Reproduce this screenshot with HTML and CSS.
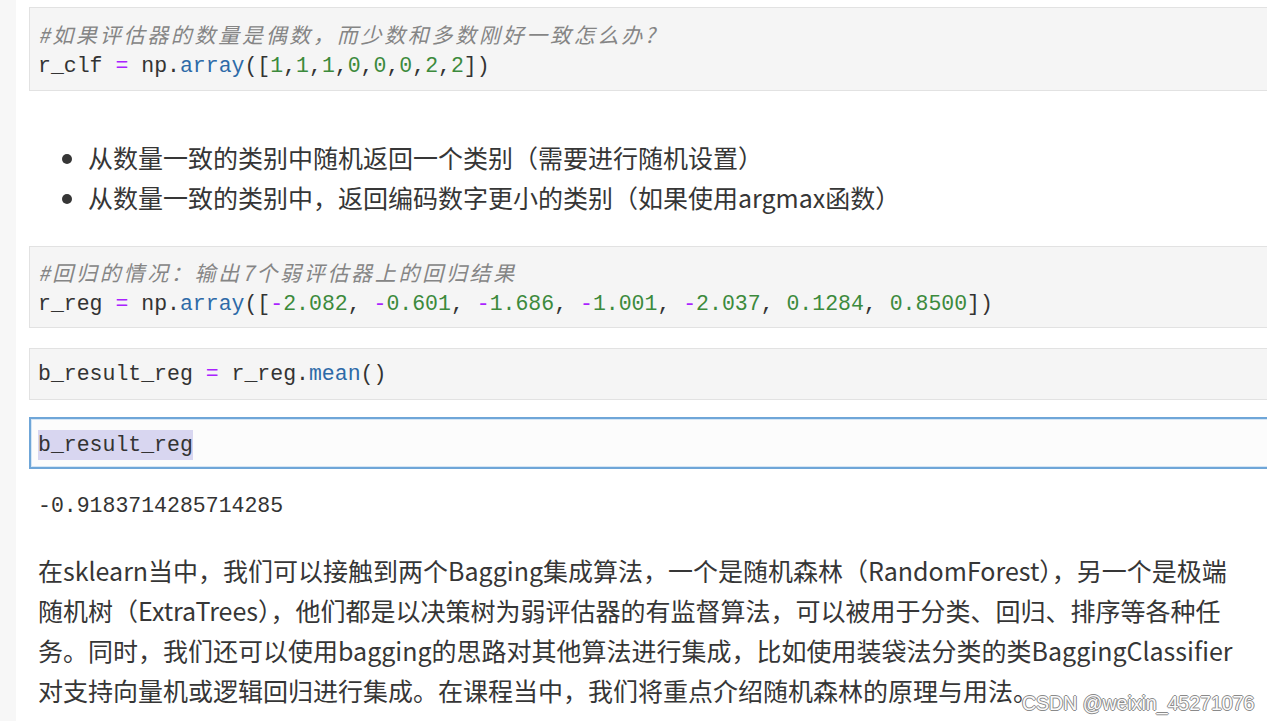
FILE: index.html
```html
<!DOCTYPE html>
<html lang="zh">
<head>
<meta charset="utf-8">
<title>Notebook</title>
<link rel="stylesheet" href="styles.css">
</head>
<body>
<div class="page">
  <div class="gutter"></div>
  <main class="notebook">
    <div class="cell code-cell c1">
      <div class="line"><span class="cm">#如果评估器的数量是偶数，而少数和多数刚好一致怎么办?</span></div>
      <div class="line">r_clf <span class="op">=</span> np.<span class="fn">array</span>([<span class="nu">1</span>,<span class="nu">1</span>,<span class="nu">1</span>,<span class="nu">0</span>,<span class="nu">0</span>,<span class="nu">0</span>,<span class="nu">2</span>,<span class="nu">2</span>])</div>
    </div>

    <ul class="md-list">
      <li>从数量一致的类别中随机返回一个类别（需要进行随机设置）</li>
      <li>从数量一致的类别中，返回编码数字更小的类别（如果使用argmax函数）</li>
    </ul>

    <div class="cell code-cell c2">
      <div class="line"><span class="cm">#回归的情况：输出7个弱评估器上的回归结果</span></div>
      <div class="line">r_reg <span class="op">=</span> np.<span class="fn">array</span>([<span class="op">-</span><span class="nu">2.082</span>, <span class="op">-</span><span class="nu">0.601</span>, <span class="op">-</span><span class="nu">1.686</span>, <span class="op">-</span><span class="nu">1.001</span>, <span class="op">-</span><span class="nu">2.037</span>, <span class="nu">0.1284</span>, <span class="nu">0.8500</span>])</div>
    </div>

    <div class="cell code-cell c3">
      <div class="line">b_result_reg <span class="op">=</span> r_reg.<span class="fn">mean</span>()</div>
    </div>

    <div class="cell code-cell selected c4">
      <div class="line"><span class="sel">b_result_reg</span></div>
    </div>

    <div class="output">-0.9183714285714285</div>

    <p class="md-para">在sklearn当中，我们可以接触到两个Bagging集成算法，一个是随机森林（RandomForest），另一个是极端<br>随机树（ExtraTrees），他们都是以决策树为弱评估器的有监督算法，可以被用于分类、回归、排序等各种任<br>务。同时，我们还可以使用bagging的思路对其他算法进行集成，比如使用装袋法分类的类BaggingClassifier<br>对支持向量机或逻辑回归进行集成。在课程当中，我们将重点介绍随机森林的原理与用法。</p>
  </main>
</div>
<div class="watermark">CSDN @weixin_45271076</div>
</body>
</html>
```

FILE: styles.css
```css
html, body {
  margin: 0;
  padding: 0;
  background: #ffffff;
  overflow: hidden;
  height: 721px;
}

.page {
  display: flex;
  min-height: 721px;
}

.gutter {
  width: 16px;
  flex: 0 0 16px;
  background: #f7f7f7;
}

.notebook {
  flex: 1;
  padding: 7px 0 0 13px;
  margin-right: -30px;
}

.cell {
  box-sizing: border-box;
  background: #f5f5f5;
  border: 1px solid #e2e2e2;
  padding: 10px 8px 9px;
  font-family: "Liberation Mono", "DejaVu Sans Mono", monospace;
  font-size: 21.5px;
  color: #333333;
}

.line {
  height: 32px;
  line-height: 32px;
  white-space: pre;
}

.c1 { height: 84px; }
.c2 { height: 82px; margin-top: 29px; padding-top: 9px; }
.c3 { height: 52px; margin-top: 20px; padding-top: 9px; }
.c4 { height: 52px; margin-top: 17px; padding-top: 10px; }

.cm {
  font-family: "Noto Sans CJK SC", "Liberation Sans", sans-serif;
  font-style: italic;
  font-size: 21px;
  letter-spacing: 2.7px;
  color: #858585;
}

.op { color: #aa22ff; }
.fn { color: #2d6aa8; }
.nu { color: #3c8a3c; }

.selected {
  background: #fcfcfc;
  border: 2px solid #6fa6d8;
  box-shadow: inset 0 0 0 1px #d5e6f5;
  padding-left: 7px;
}

.sel {
  background: #d8d6f0;
  padding: 3px 0 3px;
}

.md-list {
  margin: 46px 0 0;
  padding-left: 59px;
  font-family: "Noto Sans CJK SC", "Liberation Sans", sans-serif;
  font-size: 25px;
  line-height: 40px;
  color: #363636;
}

.md-list li {
  height: 40px;
  white-space: nowrap;
}

.output {
  margin-top: 21px;
  padding-left: 9px;
  font-family: "Liberation Mono", "DejaVu Sans Mono", monospace;
  font-size: 21.5px;
  line-height: 32px;
  color: #333333;
}

.md-para {
  margin: 28px 0 0;
  padding-left: 9px;
  font-family: "Noto Sans CJK SC", "Liberation Sans", sans-serif;
  font-size: 25px;
  line-height: 40px;
  color: #363636;
  white-space: nowrap;
}

.watermark {
  position: absolute;
  left: 1022px;
  top: 690px;
  font-family: "Liberation Sans", Arial, sans-serif;
  font-size: 19.5px;
  line-height: 26px;
  color: #fbfbfb;
  text-shadow: 1px 0 0 #8a8a8a, -1px 0 0 #8a8a8a, 0 1px 0 #8a8a8a, 0 -1px 0 #8a8a8a;
}
```
